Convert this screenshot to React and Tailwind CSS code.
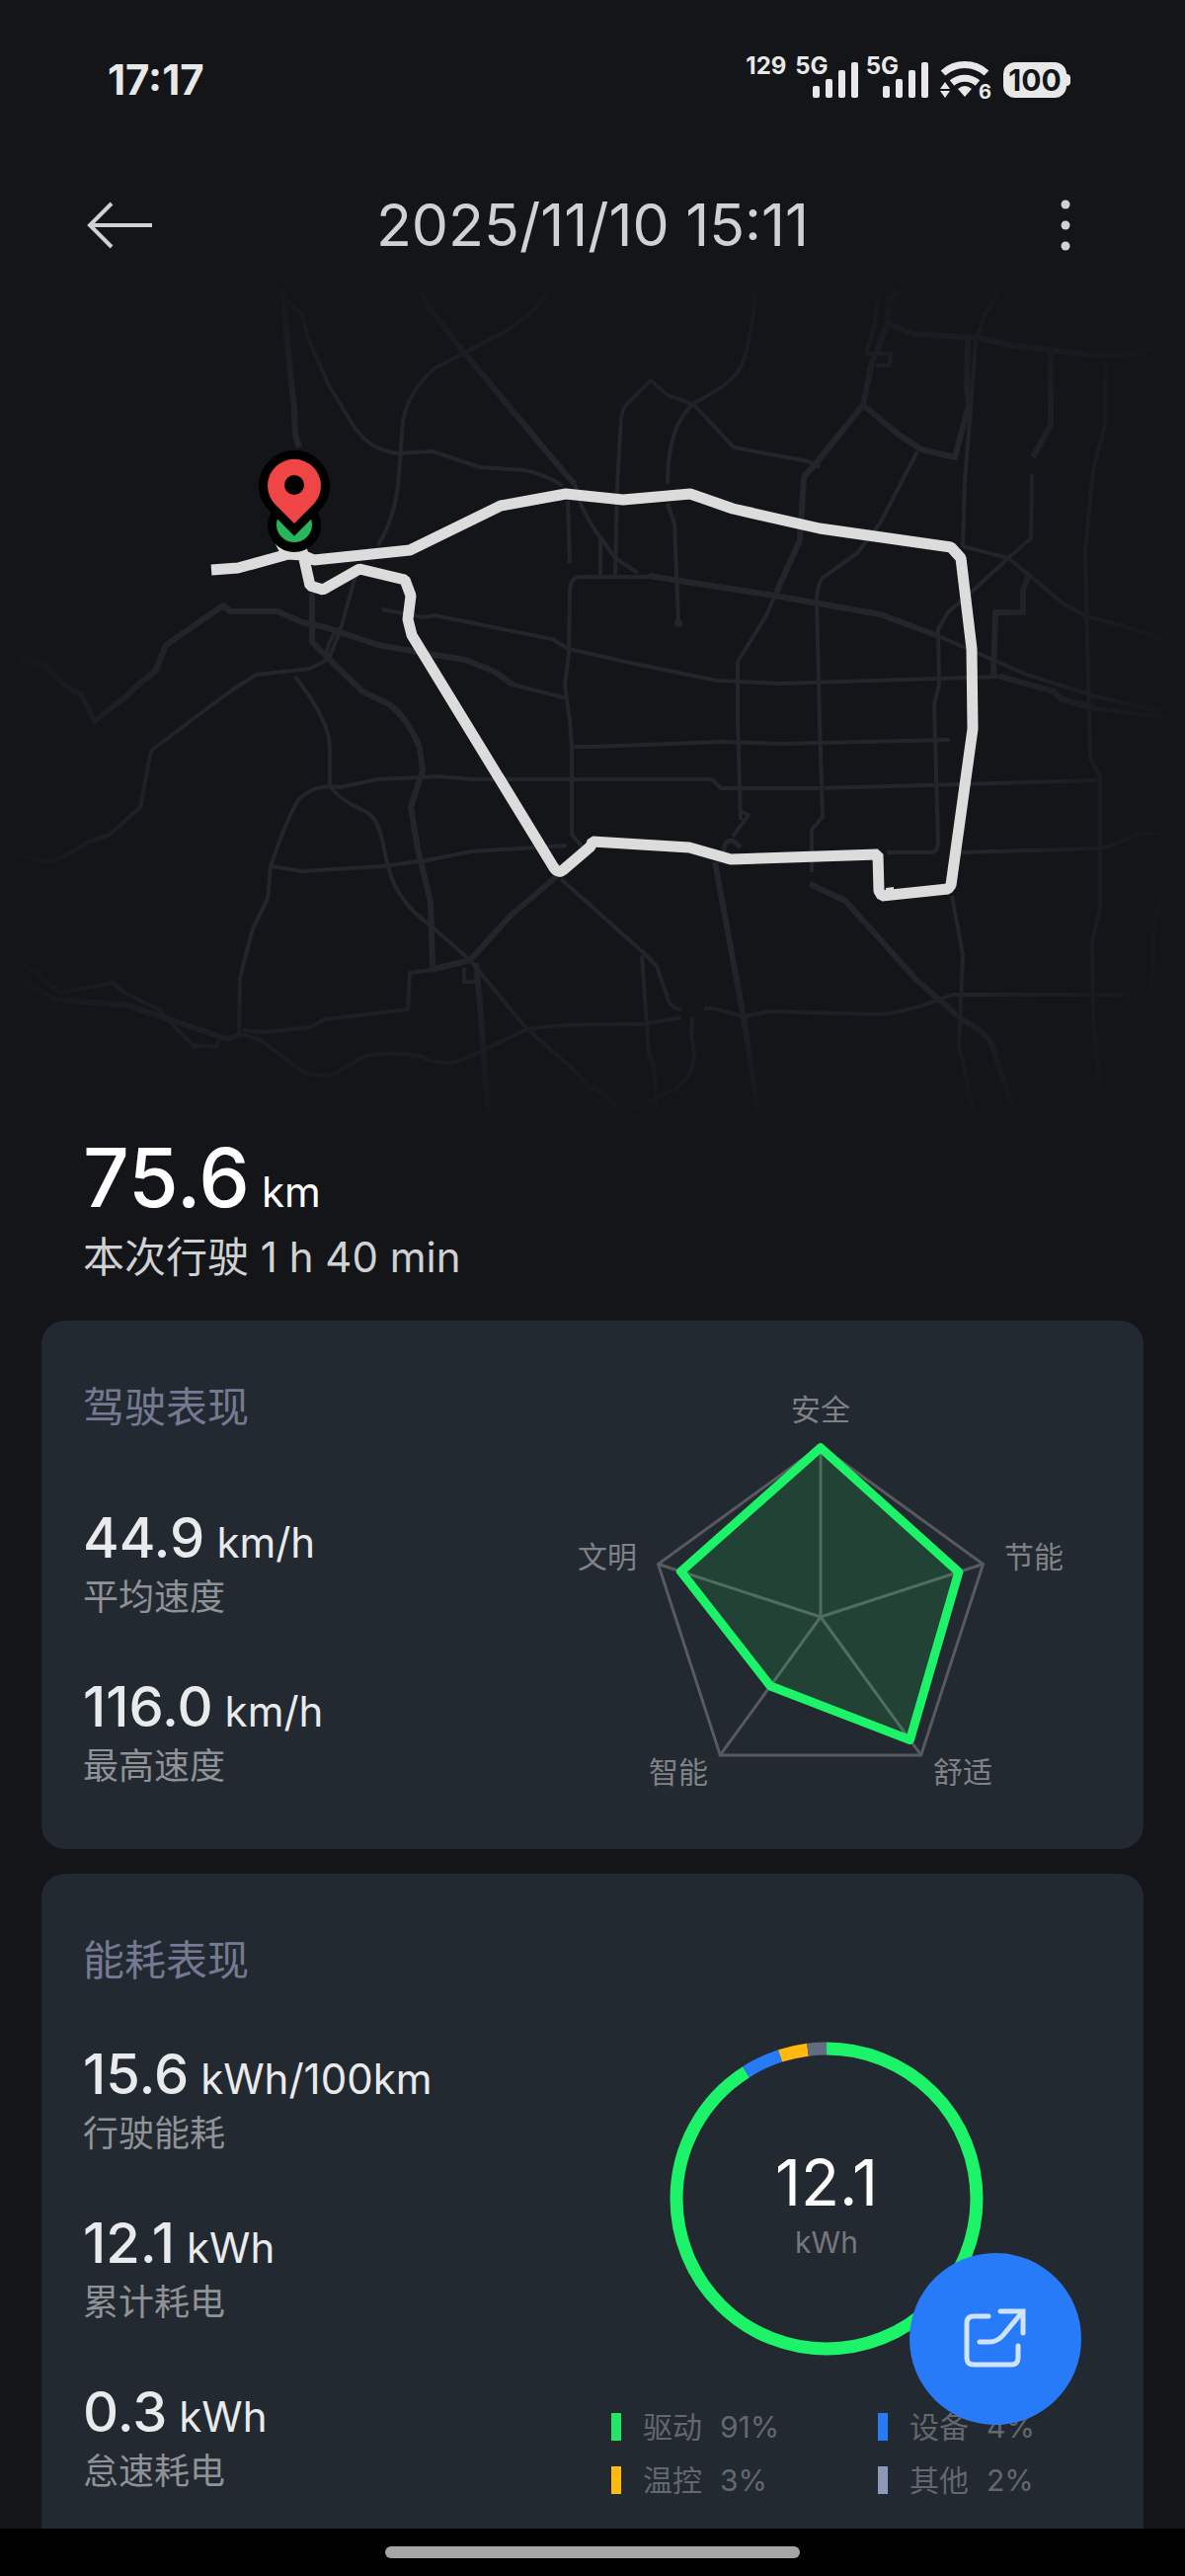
import React from "react";

const majorRoads = [
  "M285 285 L287 297 L291 347 L295 387 L298 413 L299 440 L303 453",
  "M417 280 L432 308 L471 358 L570 477 L582 490",
  "M19 665 L46 673 L65 693 L82 703 L92 723 L96 730 L130 703 L140 693 L157 680 L168 653 L226 613 L233 619 L281 619 L306 630 L329 635 L383 653 L440 663 L471 668 L501 680 L519 693",
  "M316 600 V650 L333 667 L367 700 L394 713 Q413 727 425 757 L428 780 L416 817 L423 860 L436 913 L438 980",
  "M657 583 L784 603 L891 622 L948 643",
  "M1013 685 L1067 700 L1075 708 L1109 717",
  "M916 287 L900 305 L898 330 L883 367 L874 410 L828 467 L814 483 L810 547 L786 600",
  "M900 328 L925 338 L990 342 L1025 350 L1105 359 H1143 L1189 348",
  "M874 410 L910 440 L933 455 L967 463 L981 410 L979 393 L980 343",
  "M1064 358 V430 L1046 463",
  "M1042 582 L1036 597 V620 H1008 L1006 685",
  "M564 887 L517 927 L476 972 L436 982",
  "M245 1047 L230 1052 L130 1018 L57 1012 L15 990",
  "M482 975 L486 1017 L494 1127",
  "M724 873 L753 1030 L768 1127",
  "M820 895 L856 912 L929 993 L975 1033 Q1002 1046 1006 1062 L1025 1120",
];

const minorRoads = [
  "M582 490 L589 513 L600 533 L623 565 L646 580",
  "M519 693 L574 707",
  "M600 584 H657 M948 643 L1040 683 L1109 705 L1174 720",
  "M256 280 L283 297 L306 318 L312 343 L333 390 L356 428 Q372 455 402 459 L438 457 L486 473 L532 476 Q556 482 570 492",
  "M564 283 L543 312 L513 335 L440 373 Q412 398 408 427 L404 480 Q402 520 383 552 M360 583 L344 640 L333 667 M344 635 Q330 650 330 668",
  "M575 507 L577 570",
  "M600 584 H588 Q577 584 577 600 L576 663 L572 693 L577 730 L579 757 V845 L589 857",
  "M333 667 L314 677 L260 683 L237 697 L210 717 L153 760 L142 817 L111 845 L88 853 Q60 872 46 872 L17 865",
  "M299 685 Q334 730 334 757 V793 Q336 806 371 822 Q383 830 387 850 L392 873 Q400 912 436 937 L476 972 L532 1040 L574 1077 L600 1103",
  "M387 617 L429 625 L440 623 L559 647 L576 657 L638 671 L726 689 L791 692 L1013 685",
  "M1109 717 L1189 728",
  "M766 280 L763 317 Q757 360 749 373 Q742 388 703 408 Q676 430 676 490 M676 510 L683 530 L687 630",
  "M623 583 L625 493 L629 423 L632 412 L659 385 L676 400 L703 410 L743 453 L818 467 L830 473",
  "M608 582 V547",
  "M786 600 L776 623 L747 670 V730 L750 830 M751 822 L758 825 L742 847",
  "M891 287 L885 330 L877 358 H902 L901 370 H887",
  "M988 343 L983 413 L977 487 L975 553 L1021 565 L1042 582 L1075 610 L1098 623 L1147 637 L1186 650",
  "M1023 280 L998 317 L990 340",
  "M929 457 L891 530 L868 560 L833 585 Q827 592 827 610 L830 730 L833 827 L822 840 V883",
  "M1045 480 L1044 545 L1021 565 L983 600 L960 620 L950 637 L951 693 L946 713 L950 853 Q950 864 940 863 H898",
  "M1120 365 L1119 430 L1107 477 L1099 557 L1102 690 L1104 767 L1114 787 V920 L1106 953 L1107 1033 L1117 1127",
  "M579 756 H600 L730 751 L791 753 L962 749",
  "M1113 790 L830 798 H730 L721 789 H478 L444 786 L383 789 L344 797 Q318 793 302 810 Q290 830 274 877 L271 910 L256 940 L243 990 L242 1047",
  "M274 877 L306 882 L387 877 L432 871 L478 862 L574 856",
  "M436 982 L415 985 L413 1022 L329 1032 L314 1040 L268 1045 L245 1043 M470 980 V994 H486",
  "M568 890 L650 963 L665 978 L677 1013 Q682 1022 690 1022",
  "M245 1047 L264 1053 L302 1082 Q321 1094 341 1086 L367 1070 Q390 1064 425 1069 Q450 1082 470 1072 L532 1043 Q560 1036 650 1037 L690 1030",
  "M713 1021 H722 L753 1029 L780 1024 L891 1027 Q920 1025 964 1007 H1143",
  "M964 907 L975 967 L971 1060 L987 1127",
  "M973 863 L1117 859 L1151 845 L1189 842",
  "M650 967 L657 1067 L662 1080 L665 1127",
  "M701 1030 L700 1050 Q710 1082 684 1103 L660 1113 L634 1127 L600 1100",
  "M17 970 L61 1005 L115 995 L124 1004 L161 1022 L175 1038 L199 1062 M194 1058 L220 1060 L222 1050",
  "M1189 905 Q1170 912 1169 940 L1166 1000",
];

const route =
  "M214 577 L241 575 L292 561 L306 562 L318 567 L415 557 L507 512 L573 500 L631 506 L699 500 L742 515 L830 535 L963 554 L973 565 L984 657 L985 738 L963 896 L960 900 L893 907 L890 902 L889 865 L740 870 L698 858 L600 852 L598 857 L570 881 Q565 885 560 877 L417 643 L413 627 L416 603 L410 587 L364 576 L327 597 L314 593 L308 566";

const tripStats = [
  { value: "44.9", unit: "km/h", label: "平均速度" },
  { value: "116.0", unit: "km/h", label: "最高速度" },
];

const energyStats = [
  { value: "15.6", unit: "kWh/100km", label: "行驶能耗" },
  { value: "12.1", unit: "kWh", label: "累计耗电" },
  { value: "0.3", unit: "kWh", label: "怠速耗电" },
];

const energyParts = [
  { name: "驱动", percent: 91, color: "bg-[#22e865]", stroke: "#1cf368" },
  { name: "设备", percent: 4, color: "bg-[#277bf9]", stroke: "#277bf9" },
  { name: "温控", percent: 3, color: "bg-[#ffb90f]", stroke: "#ffb90f" },
  { name: "其他", percent: 2, color: "bg-[#8d99b8]", stroke: "#626c80" },
];

function Signal() {
  return (
    <div className="flex h-14 items-start">
      <span className="-mr-4 text-2xl leading-7 font-bold">5G</span>
      <svg viewBox="0 0 46 36" className="mt-[10px] h-9 w-[46px]" fill="currentColor">
        <rect x="0" y="24" width="7" height="12" rx="2" />
        <rect x="13" y="17" width="7" height="19" rx="2" />
        <rect x="26" y="8" width="7" height="28" rx="2" />
        <rect x="39" y="0" width="7" height="36" rx="2" />
      </svg>
    </div>
  );
}

function StatusBar() {
  return (
    <div className="flex h-[162px] shrink-0 items-center justify-between pr-[116px] pl-[109px] text-[#e8e8e8]">
      <span className="text-[42px] leading-[48px] font-bold">17:17</span>
      <div className="flex items-center">
        <div className="flex h-14 w-[50px] items-start">
          <span className="text-2xl leading-7 font-bold">129</span>
        </div>
        <div className="flex gap-2">
          <Signal />
          <Signal />
        </div>
        <svg viewBox="0 0 54 48" className="ml-3 h-12 w-[54px]" fill="none" stroke="currentColor">
          <path d="M3 17 A33 33 0 0 1 47 17" strokeWidth="7" />
          <path d="M12 27 A20 20 0 0 1 38 27" strokeWidth="7" />
          <path d="M18 33 Q25 27 32 33 L25 41 Z" fill="currentColor" stroke="none" />
          <path d="M0 33 L5 26 L10 33 Z M0 35 L5 42 L10 35 Z" fill="currentColor" stroke="none" />
          <text x="39" y="43" className="text-[20px] font-bold" fill="currentColor" stroke="none">
            6
          </text>
        </svg>
        <div className="ml-[10px] flex items-center">
          <span className="flex h-9 w-16 items-center justify-center rounded-xl bg-[#e8e8e8] text-[30px] leading-9 font-bold text-[#131519]">
            100
          </span>
          <span className="h-3 w-1 rounded-r bg-[#e8e8e8]" />
        </div>
      </div>
    </div>
  );
}

function Header() {
  return (
    <header className="flex h-[132px] shrink-0 items-center justify-between px-[88px] text-[#d0d1d2]">
      <button aria-label="返回">
        <svg viewBox="0 0 66 48" className="h-12 w-[66px]" fill="none" stroke="currentColor" strokeWidth="4">
          <path d="M25 2 L3 24 L25 46 M3 24 H66" />
        </svg>
      </button>
      <h1 className="text-[59px] leading-[72px]">2025/11/10 15:11</h1>
      <button aria-label="更多" className="flex w-[66px] justify-center">
        <svg viewBox="0 0 10 54" className="h-[54px] w-[10px]" fill="currentColor">
          <circle cx="5" cy="6" r="4.5" />
          <circle cx="5" cy="27" r="4.5" />
          <circle cx="5" cy="48" r="4.5" />
        </svg>
      </button>
    </header>
  );
}

function RouteMap() {
  return (
    <svg viewBox="0 294 1200 840" className="block w-full shrink-0">
      <defs>
        <linearGradient id="fadeX">
          <stop offset="0" stopColor="#131519" />
          <stop offset="0.17" stopColor="#131519" stopOpacity="0" />
          <stop offset="0.83" stopColor="#131519" stopOpacity="0" />
          <stop offset="1" stopColor="#131519" />
        </linearGradient>
        <linearGradient id="fadeY" x2="0" y2="1">
          <stop offset="0" stopColor="#131519" />
          <stop offset="0.2" stopColor="#131519" stopOpacity="0" />
          <stop offset="0.8" stopColor="#131519" stopOpacity="0" />
          <stop offset="1" stopColor="#131519" />
        </linearGradient>
      </defs>
      <g fill="none" stroke="#22252a" strokeLinejoin="round">
        {majorRoads.map((d) => (
          <path key={d} d={d} strokeWidth="6" />
        ))}
        {minorRoads.map((d) => (
          <path key={d} d={d} strokeWidth="4" />
        ))}
        <circle cx="687" cy="631" r="4" fill="#22252a" stroke="none" />
        <path d="M733 862 Q733 850 742 851 L750 858" strokeWidth="5" />
      </g>
      <rect y="270" width="1200" height="870" fill="url(#fadeX)" />
      <rect y="270" width="1200" height="870" fill="url(#fadeY)" />

      <path d={route} fill="none" stroke="#dcdcdc" strokeWidth="11" strokeLinejoin="bevel" />
      <path d="M278 549 L285 563 H313 L310 552 Z M897 899 L905 898 V905 H897 Z" fill="#dcdcdc" />

      <circle cx="298" cy="532" r="27" fill="#000" />
      <circle cx="298" cy="531" r="18" fill="#27b75a" />
      <path
        d="M298 530 L279 511 A27 27 0 1 1 317 511 Z"
        fill="#000"
        stroke="#000"
        strokeWidth="18"
      />
      <path d="M298 530 L279 511 A27 27 0 1 1 317 511 Z" fill="#f04545" />
      <circle cx="298" cy="491" r="10" fill="#000" />
    </svg>
  );
}

function Stat({ value, unit, label }) {
  return (
    <div>
      <div className="flex items-baseline gap-3 text-[#e9eaec]">
        <span className="text-[56px] leading-[64px] font-medium">{value}</span>
        <span className="text-[42px] leading-[48px]">{unit}</span>
      </div>
      <div className="mt-1 text-4xl leading-[48px] text-[#8f9296]">{label}</div>
    </div>
  );
}

// scores run clockwise from the top
const radarAxes = [
  { name: "安全", score: 0.99, x: 248, y: 34 },
  { name: "节能", score: 0.85, x: 464, y: 183 },
  { name: "舒适", score: 0.89, x: 392, y: 401 },
  { name: "智能", score: 0.5, x: 104, y: 401 },
  { name: "文明", score: 0.86, x: 32, y: 183 },
];

function radarPoint(i, r) {
  const a = (i * 2 * Math.PI) / 5;
  return `${248 + 173 * r * Math.sin(a)},${233 - 173 * r * Math.cos(a)}`;
}

function Radar() {
  return (
    <svg viewBox="0 0 496 408" className="h-[408px] w-[496px]">
      <g fill="none" stroke="#595a5d" strokeWidth="3">
        <polygon points={radarAxes.map((_, i) => radarPoint(i, 1)).join(" ")} />
        {radarAxes.map((axis, i) => (
          <polyline key={axis.name} points={`248,233 ${radarPoint(i, 1)}`} />
        ))}
      </g>
      <polygon
        points={radarAxes.map((axis, i) => radarPoint(i, axis.score)).join(" ")}
        fill="#1cf368"
        fillOpacity="0.13"
        stroke="#1cf368"
        strokeWidth="9"
        strokeLinejoin="round"
      />
      {radarAxes.map((axis) => (
        <text key={axis.name} x={axis.x} y={axis.y} textAnchor="middle" className="text-[30px]" fill="#7f8287">
          {axis.name}
        </text>
      ))}
    </svg>
  );
}

function EnergyRing() {
  let start = 0;
  return (
    <div className="relative flex h-[318px] w-[318px] flex-col items-center justify-center pt-4">
      <svg viewBox="0 0 318 318" className="absolute inset-0 -rotate-90">
        {energyParts.map((part) => {
          const offset = -start;
          start += part.percent;
          return (
            <circle
              key={part.name}
              cx="159"
              cy="159"
              r="152"
              fill="none"
              stroke={part.stroke}
              strokeWidth="13"
              pathLength="100"
              strokeDasharray={`${part.percent} ${100 - part.percent}`}
              strokeDashoffset={offset}
            />
          );
        })}
      </svg>
      <span className="text-[64px] leading-[72px] text-white">12.1</span>
      <span className="text-[30px] leading-[48px] text-[#74777d]">kWh</span>
    </div>
  );
}

export default function App() {
  return (
    <div className="relative flex h-screen flex-col bg-[#131519] font-['Inter','Noto_Sans_CJK_SC',sans-serif]">
      <main className="flex min-h-0 flex-1 flex-col overflow-y-auto [scrollbar-width:none]">
        <StatusBar />
        <Header />
        <RouteMap />

        <section className="mt-[15px] px-[84px]">
          <div className="flex items-baseline gap-3 text-white">
            <span className="text-[82px] leading-[88px] font-medium">75.6</span>
            <span className="text-[42px] leading-[48px]">km</span>
          </div>
          <p className="mt-2 text-[42px] leading-[56px] text-[#d0d1d2]">本次行驶 1 h 40 min</p>
        </section>

        <section className="mx-[42px] mt-9 flex shrink-0 justify-between rounded-3xl bg-[#232930] pt-[60px] pb-[60px] pl-[42px]">
          <div>
            <h2 className="text-[42px] leading-[56px] text-[#757a92]">驾驶表现</h2>
            <div className="mt-[72px] flex flex-col gap-[55px]">
              {tripStats.map((s) => (
                <Stat key={s.label} {...s} />
              ))}
            </div>
          </div>
          <div className="mr-[79px] pt-[7px]">
            <Radar />
          </div>
        </section>

        <section className="mx-[42px] mt-[25px] flex shrink-0 justify-between rounded-3xl bg-[#232930] pt-[60px] pb-[60px] pl-[42px]">
          <div>
            <h2 className="text-[42px] leading-[56px] text-[#757a92]">能耗表现</h2>
            <div className="mt-[55px] flex flex-col gap-[55px]">
              {energyStats.map((s) => (
                <Stat key={s.label} {...s} />
              ))}
            </div>
          </div>
          <div className="mr-[103px] flex w-[436px] flex-col items-center pt-[110px]">
            <EnergyRing />
            <ul className="mt-[48px] grid w-full grid-cols-[270px_1fr] gap-y-[6px]">
              {energyParts.map((part) => (
                <li key={part.name} className="flex items-center whitespace-nowrap text-[30px] leading-[48px] text-[#63676e]">
                  <span className={`h-7 w-[10px] ${part.color}`} />
                  <span className="ml-[22px]">{part.name}</span>
                  <span className="ml-[18px]">{part.percent}%</span>
                </li>
              ))}
            </ul>
          </div>
        </section>
      </main>

      <button
        aria-label="分享"
        className="absolute right-[105px] bottom-[153px] flex h-[174px] w-[174px] items-center justify-center rounded-full bg-[#277bf9] text-[#cfe2fe]"
      >
        <svg viewBox="0 0 66 62" className="h-[62px] w-[66px]" fill="none" stroke="currentColor" strokeWidth="5" strokeLinecap="round">
          <path d="M26 8 H11 Q4 8 4 15 V50 Q4 57 11 57 H49 Q56 57 56 50 V38" />
          <path d="M38 3 H61 V25" />
          <path d="M60 4 L41 27 Q35 34 27 34 H17" />
        </svg>
      </button>

      <div className="flex h-12 shrink-0 justify-center bg-black pt-[18px]">
        <span className="h-3 w-[420px] rounded-full bg-[#a6a6a6]" />
      </div>
    </div>
  );
}
